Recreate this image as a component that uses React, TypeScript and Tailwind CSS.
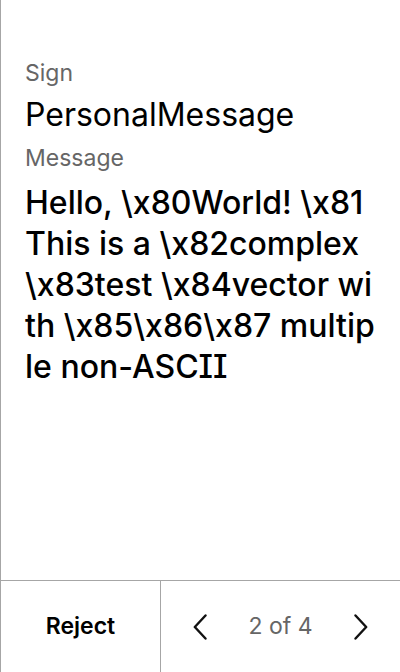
import React from 'react';

function Chevron({ dir }: { dir: 'left' | 'right' }) {
  return (
    <svg width="14" height="26" viewBox="0 0 14 26" fill="none" stroke="#111" strokeWidth={2.4} strokeLinecap="round" strokeLinejoin="round">
      {dir === 'left' ? <path d="M12.5 1.5L1.8 13l10.7 11.5" /> : <path d="M1.5 1.5L12.2 13 1.5 24.5" />}
    </svg>
  );
}

export default function App() {
  return (
    <div className="h-[672px] w-[400px] bg-white border-l border-[#a6a6a6] flex flex-col font-['Inter','Noto_Sans',sans-serif] [font-feature-settings:'cv08']">
      {/* Request body */}
      <div className="flex-1 px-6 pt-[58px]">
        <div className="text-[23px] leading-[30px] text-[#666]">Sign</div>
        <div className="text-[32px] leading-[40px] text-black mt-[7px]">PersonalMessage</div>
        <div className="text-[23px] leading-[30px] text-[#666] mt-[8px]">Message</div>
        <div className="text-[32px] leading-[41px] text-black break-all font-medium mt-[9px]">
          Hello, \x80World! \x81 This is a \x82complex \x83test \x84vector with \x85\x86\x87 multiple non-ASCII
        </div>
      </div>

      {/* Footer */}
      <div className="h-[92px] border-t border-[#a6a6a6] flex">
        <button className="w-[160px] border-r border-[#a6a6a6] flex items-center justify-center text-[23px] font-semibold text-black">
          Reject
        </button>
        <div className="flex-1 flex items-center justify-between pl-[32px] pr-[32px]">
          <Chevron dir="left" />
          <span className="text-[23px] text-[#666]">2 of 4</span>
          <Chevron dir="right" />
        </div>
      </div>
    </div>
  );
}
